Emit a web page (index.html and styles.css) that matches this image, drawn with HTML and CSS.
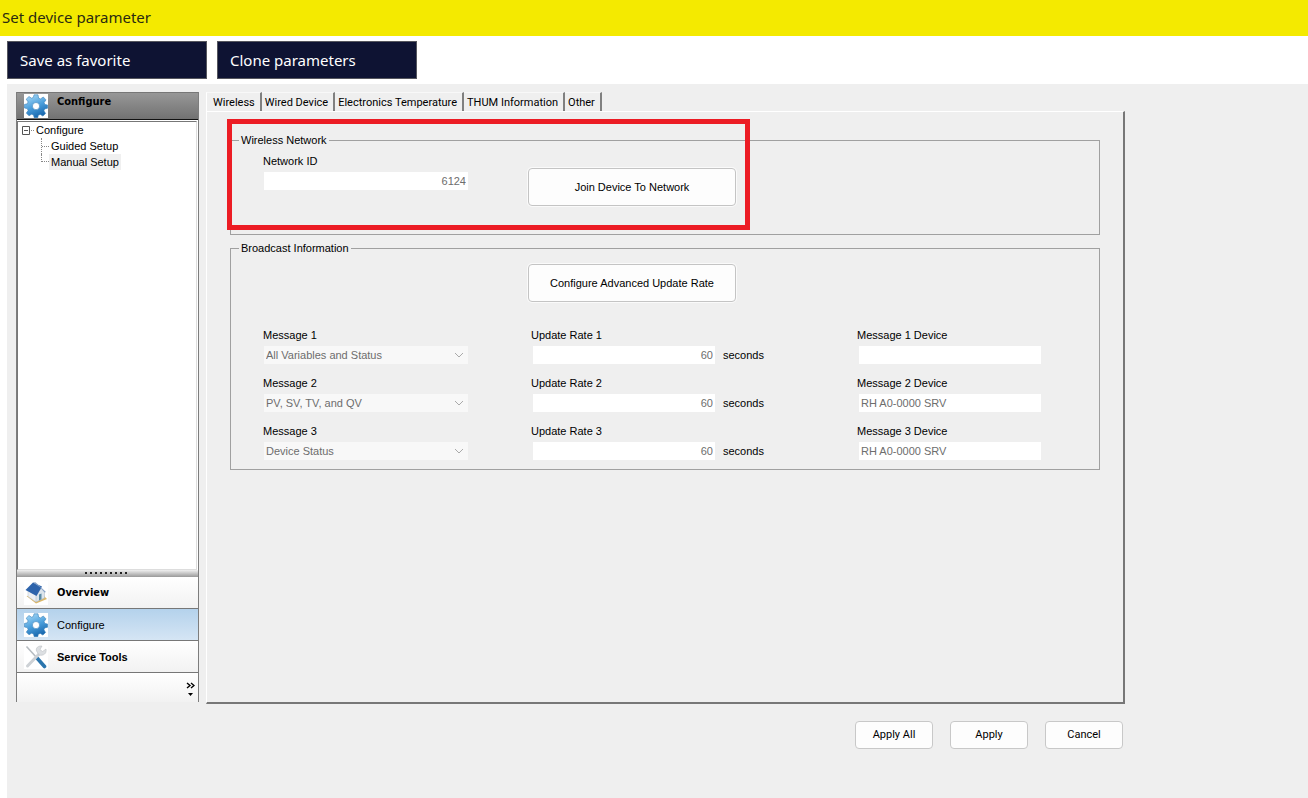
FILE: index.html
```html
<!DOCTYPE html>
<html lang="en">
<head>
  <meta charset="UTF-8" />
  <meta name="viewport" content="width=device-width, initial-scale=1.0"/>
  <title>Set device parameter</title>
  <link rel="stylesheet" href="styles.css">
</head>
<body>

<svg class="sprite" aria-hidden="true">
  <defs>
    <linearGradient id="gearFill" gradientUnits="userSpaceOnUse" x1="6" y1="2" x2="15" y2="23">
      <stop offset="0" stop-color="#9bd2f4"/>
      <stop offset=".5" stop-color="#4a9edb"/>
      <stop offset="1" stop-color="#1766ad"/>
    </linearGradient>
    <symbol id="gear" viewBox="0 0 24 24">
      <path fill="url(#gearFill)" stroke="#3a82bb" stroke-width=".6" stroke-linejoin="round" fill-rule="evenodd" d="M10 .8h4l.6 3.300 1.900.8L19.300 3 22 5.900l-1.900 2.700.8 1.900 2.700.5v3.200l-2.900.7-.8 1.900 1.700 2.600-2.700 2.700-2.600-1.700-2 .8-.5 2.500h-3.600l-.7-2.700-1.900-.8-2.600 1.600-2.700-2.700 1.800-2.500-.8-2L.4 14v-3.500l2.900-.7.8-1.900-1.900-2.700L5 2.500l2.500 1.700 1.900-.8zM12 8.500a3.600 3.600 0 1 0 0 7.200A3.600 3.600 0 0 0 12 8.500z"/>
    </symbol>
  </defs>
</svg>

<header class="title-bar">
  <h1>Set device parameter</h1>
</header>

<div class="toolbar">
  <button class="tool-btn">Save as favorite</button>
  <button class="tool-btn">Clone parameters</button>
</div>

<div class="workspace">
  <aside class="sidebar">
    <div class="sidebar-head">
      <svg class="icon boxed"><use href="#gear"/></svg>
      <h2>Configure</h2>
    </div>

    <div class="tree">
      <div class="tree-root">
        <svg width="12" height="9" viewBox="0 0 12 9"><path d="M.5.500h7v8h-7zM2 4.500h4" fill="none" stroke="#555"/><path d="M9 4.500h3" stroke="#888" stroke-dasharray="1 1"/></svg>
        <a href="#">Configure</a>
      </div>
      <ul>
        <li><a href="#">Guided Setup</a></li>
        <li><a href="#" class="selected">Manual Setup</a></li>
      </ul>
    </div>

    <div class="splitter"><span></span></div>

    <nav class="side-nav">
      <button class="nav-btn">
        <svg class="icon boxed" viewBox="0 0 24 24">
          <path d="M2.500 15l9.500 7.500L23 18l-4-4z" fill="#dcb766"/>
          <path d="M4 9v6.500l8 5.500 1.500-8z" fill="#eceff3" stroke="#b9c0c8" stroke-width=".5"/>
          <path d="M12 21v-7l5-6.500 3.500 3V17z" fill="#dbe4ec" stroke="#a9b5c0" stroke-width=".5"/>
          <path d="M15 13.500l2.500-1v5.800L15 19.500z" fill="#5b8ca6"/>
          <path d="M1.500 9L9 1.500l9 4L12.500 15z" fill="#2d63ab"/>
          <path d="M9 1.500l2.500-.3L22 11l-1.500.5-4-5z" fill="#86a2c6"/>
        </svg>
        Overview
      </button>
      <button class="nav-btn active">
        <svg class="icon boxed"><use href="#gear"/></svg>
        Configure
      </button>
      <button class="nav-btn plain">
        <svg class="icon boxed" viewBox="0 0 24 24">
          <path d="M2.500 1.500L13 13" stroke="#b6bcc1" stroke-width="1.600"/>
          <path d="M13 13l7.500 8.500" stroke="#2b75ad" stroke-width="3.600" stroke-linecap="round"/>
          <path d="M3.500 21L16 8" stroke="#cdd1d5" stroke-width="3" stroke-linecap="round"/>
          <path d="M22 4l-3.500 2.500-2.500-2L18 1c-4-.5-6.500 2-5.500 5l2.500 4c4 1 8-1 7-6z" fill="#dcdfe2" stroke="#b4b9bd" stroke-width=".5"/>
        </svg>
        Service Tools
      </button>
      <div class="nav-more">
        <button aria-label="More">
          <svg width="9" height="15" viewBox="0 0 9 15"><path d="M1 1l3 2.500L1 6M5 1l3 2.500L5 6" fill="none" stroke="#000" stroke-width="1.400"/><path d="M2 11h5l-2.500 3z"/></svg>
        </button>
      </div>
    </nav>
  </aside>

  <main class="content">
    <div class="tabs" role="tablist">
      <button class="tab active" role="tab" aria-selected="true">Wireless</button>
      <button class="tab" role="tab">Wired Device</button>
      <button class="tab" role="tab">Electronics Temperature</button>
      <button class="tab" role="tab">THUM Information</button>
      <button class="tab" role="tab">Other</button>
    </div>

    <section class="panel">
      <div class="highlight"></div>

      <fieldset class="group network">
        <legend>Wireless Network</legend>
        <div class="grid">
          <div class="field">
            <label for="networkId">Network ID</label>
            <input type="text" id="networkId" class="wide num" value="6124" disabled>
          </div>
          <button class="action-btn">Join Device To Network</button>
        </div>
      </fieldset>

      <fieldset class="group broadcast">
        <legend>Broadcast Information</legend>
        <div class="grid">
          <button class="action-btn">Configure Advanced Update Rate</button>
        </div>
        <div class="grid rows">
          <div class="field">
            <label for="msg1">Message 1</label>
            <select id="msg1" disabled><option>All Variables and Status</option></select>
          </div>
          <div class="field">
            <label for="rate1">Update Rate 1</label>
            <div class="unit"><input type="text" id="rate1" class="num" value="60" disabled><span>seconds</span></div>
          </div>
          <div class="field">
            <label for="dev1">Message 1 Device</label>
            <input type="text" id="dev1" disabled>
          </div>

          <div class="field">
            <label for="msg2">Message 2</label>
            <select id="msg2" disabled><option>PV, SV, TV, and QV</option></select>
          </div>
          <div class="field">
            <label for="rate2">Update Rate 2</label>
            <div class="unit"><input type="text" id="rate2" class="num" value="60" disabled><span>seconds</span></div>
          </div>
          <div class="field">
            <label for="dev2">Message 2 Device</label>
            <input type="text" id="dev2" value="RH A0-0000 SRV" disabled>
          </div>

          <div class="field">
            <label for="msg3">Message 3</label>
            <select id="msg3" disabled><option>Device Status</option></select>
          </div>
          <div class="field">
            <label for="rate3">Update Rate 3</label>
            <div class="unit"><input type="text" id="rate3" class="num" value="60" disabled><span>seconds</span></div>
          </div>
          <div class="field">
            <label for="dev3">Message 3 Device</label>
            <input type="text" id="dev3" value="RH A0-0000 SRV" disabled>
          </div>
        </div>
      </fieldset>
    </section>

    <div class="footer">
      <button class="footer-btn">Apply All</button>
      <button class="footer-btn">Apply</button>
      <button class="footer-btn">Cancel</button>
    </div>
  </main>
</div>

</body>
</html>
```

FILE: styles.css
```css
* {
  box-sizing: border-box;
}

body {
  margin: 0;
  min-height: 100vh;
  display: flex;
  flex-direction: column;
  font-family: "Liberation Sans", Arial, sans-serif;
  font-size: 11px;
  line-height: 14px;
  color: #000;
  background: #fff;
}

button, input, select {
  font: inherit;
  color: inherit;
}

h1, h2, ul {
  margin: 0;
  padding: 0;
}

.sprite {
  position: absolute;
  width: 0;
  height: 0;
}

.title-bar {
  height: 36px;
  padding: 0 2px 2px;
  display: flex;
  align-items: center;
  background: #f4ea00;
}

.title-bar h1 {
  font: 15px/20px "Noto Sans", sans-serif;
  color: #2b2b10;
}

.toolbar {
  display: flex;
  gap: 10px;
  padding: 5px 7px;
}

.tool-btn {
  width: 200px;
  height: 38px;
  padding: 0 12px;
  text-align: left;
  font: 15px/20px "Noto Sans", sans-serif;
  color: #fff;
  background: #0e1333;
  border: 1px solid #55565e;
}

.workspace {
  flex: 1;
  display: flex;
  gap: 7px;
  margin-left: 7px;
  padding: 8px 183px 0 9px;
  background: #efefef;
}

/* sidebar */
.sidebar {
  width: 183px;
  margin-bottom: 96px;
  display: flex;
  flex-direction: column;
  border: 1px solid #7d7d7d;
  border-width: 0 1px;
  background: #fff;
}

.sidebar-head {
  height: 28px;
  display: flex;
  gap: 9px;
  padding: 1px 7px 0;
  border-top: 1px solid #777;
  border-bottom: 1px solid #111;
  background: linear-gradient(#979797, #727272);
}

.sidebar-head h2 {
  font: bold 11px/16px "DejaVu Sans Condensed", "DejaVu Sans", sans-serif;
}

.icon {
  width: 24px;
  height: 24px;
  flex: none;
}

.icon.boxed {
  background: #fff;
}

.tree {
  flex: 1;
  margin: 1px 1px 0 0;
  padding: 0 4px;
  border: 1px solid #777;
  border-right-color: #ddd;
  border-bottom-color: #ddd;
}

.tree a {
  color: #000;
  text-decoration: none;
}

.tree-root {
  display: flex;
  align-items: center;
  gap: 2px;
  height: 16px;
}

.tree ul {
  list-style: none;
  margin-left: 19px;
}

.tree li {
  display: flex;
  align-items: center;
  height: 16px;
  border-left: 1px dotted #888;
}

.tree li:last-child {
  align-items: flex-start;
  height: 8px;
}

.tree li::before {
  content: "";
  width: 7px;
  border-top: 1px dotted #888;
}

.tree li:last-child::before {
  margin-top: 7px;
}

.tree li a {
  padding: 1px 2px;
  line-height: 14px;
}

.tree .selected {
  background: #f0f0f0;
}

.splitter {
  height: 7px;
  display: flex;
  justify-content: center;
  padding: 2px 3px 0 0;
  background: linear-gradient(#f0f0f0, #999);
}

.splitter span {
  width: 43px;
  height: 2px;
  background: repeating-linear-gradient(90deg, #222 0 2px, transparent 2px 5px);
}

.nav-btn {
  width: 100%;
  height: 32px;
  display: flex;
  align-items: center;
  gap: 9px;
  padding: 0 7px;
  border: 0;
  border-bottom: 1px solid #777;
  font: bold 11px/14px "DejaVu Sans Condensed", "DejaVu Sans", sans-serif;
  background: linear-gradient(#fff, #f2f2f2);
}

.nav-btn.active {
  font: 11px/14px "Liberation Sans", Arial, sans-serif;
  background: linear-gradient(#b4d2ec, #d5e5f4);
}

.nav-btn.plain {
  font: bold 11px/14px "Liberation Sans", Arial, sans-serif;
}

.nav-more {
  height: 29px;
  display: flex;
  justify-content: flex-end;
  align-items: center;
  padding: 4px 3px 0 0;
  background: linear-gradient(#fff, #f2f2f2);
}

.nav-more button {
  display: flex;
  padding: 0;
  border: 0;
  background: none;
}

/* tabs and panel */
.content {
  flex: 1;
  display: flex;
  flex-direction: column;
}

.tabs {
  display: flex;
  height: 19px;
}

.tab {
  padding: 2px 5px 0 3px;
  border: 0;
  border-top: 1px solid #f8f8f8;
  border-right: 2px solid #808080;
  font: 11px/14px Roboto, sans-serif;
  background: none;
}

.tab.active {
  padding-left: 6px;
  border-left: 1px solid #fff;
}

.panel {
  position: relative;
  flex: 1;
  padding: 21px 23px 20px;
  border: 1px solid #fff;
  border-right: 2px solid #777;
  border-bottom: 2px solid #777;
}

.highlight {
  position: absolute;
  left: 20px;
  top: 7px;
  width: 523px;
  height: 111px;
  border: 5px solid #ec1c24;
  pointer-events: none;
}

.group {
  margin: 0 0 6px;
  padding: 9px 0 9px 29px;
  border: 1px solid #a0a0a0;
}

.group.network {
  padding-top: 7px;
  padding-bottom: 28px;
}

.group legend {
  margin-left: -21px;
  padding: 0 2px;
}

.grid {
  display: grid;
  grid-template-columns: 268fr 326fr 245fr;
}

.rows {
  margin-top: 26px;
  row-gap: 12px;
}

.field {
  display: flex;
  flex-direction: column;
  align-items: flex-start;
  gap: 4px;
}

.field label {
  padding-left: 3px;
}

.field input,
.field select {
  width: 182px;
  height: 18px;
  margin: 0 0 0 5px;
  padding: 0 2px;
  border: 0;
  color: #6d6d6d;
  background: #fff;
}

.field select,
.field .wide {
  width: 204px;
  margin-left: 4px;
}

.field select {
  appearance: none;
  opacity: 1;
  background: #f8f8f8 url("data:image/svg+xml,%3Csvg xmlns='http://www.w3.org/2000/svg' width='10' height='6'%3E%3Cpath d='M1 1l4 4 4-4' fill='none' stroke='%23aaa'/%3E%3C/svg%3E") no-repeat right 4px center;
}

.field .num {
  text-align: right;
}

.unit {
  display: flex;
  align-items: center;
  gap: 8px;
}

.action-btn {
  grid-column: 2;
  width: 208px;
  height: 38px;
  border: 1px solid #c4c4c4;
  border-radius: 4px;
  background: #fdfdfd;
  box-shadow: 0 0 0 1px #fafafa;
}

.network .action-btn {
  margin-top: 14px;
}

.footer {
  display: flex;
  justify-content: flex-end;
  gap: 17px;
  padding: 17px 2px 49px;
}

.footer-btn {
  width: 78px;
  height: 28px;
  border: 1px solid #c8c8c8;
  border-radius: 4px;
  font: 11px/14px Roboto, sans-serif;
  background: #fdfdfd;
}
```
